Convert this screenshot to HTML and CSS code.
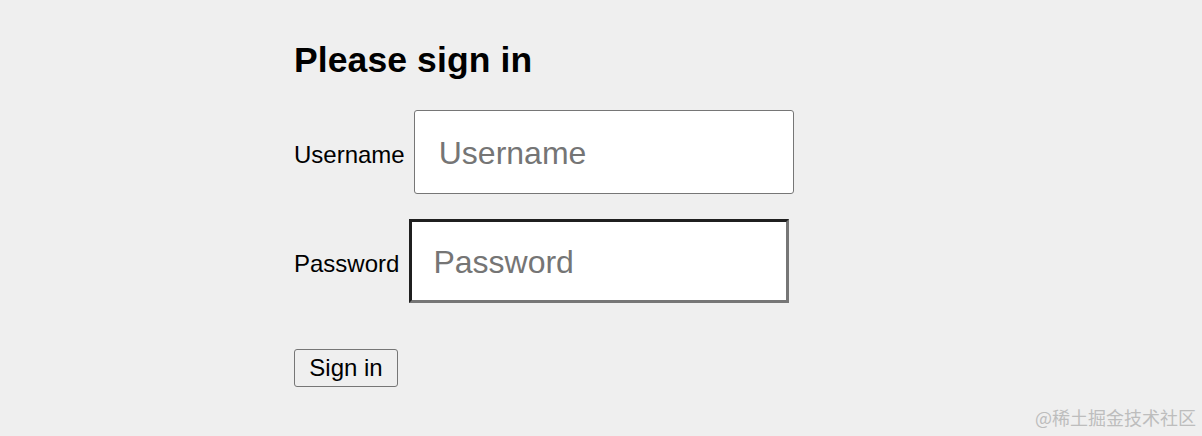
FILE: index.html
```html
<!DOCTYPE html>
<html lang="en">
<head>
<meta charset="utf-8">
<title>Please sign in</title>
<link rel="stylesheet" href="styles.css">
</head>
<body>
<main class="signin">
  <h2 class="title">Please sign in</h2>
  <form class="form">
    <div class="row">
      <label class="label" for="username">Username</label>
      <input class="field field-user" id="username" type="text" placeholder="Username">
    </div>
    <div class="row">
      <label class="label" for="password">Password</label>
      <input class="field field-pass" id="password" type="password" placeholder="Password">
    </div>
    <button class="btn" type="button">Sign in</button>
  </form>
</main>
<div class="watermark">@稀土掘金技术社区</div>
</body>
</html>
```
FILE: styles.css
```css
html, body {
  margin: 0;
  padding: 0;
  height: 100%;
}
body {
  background: #efefef;
  font-family: "Liberation Sans", Arial, Helvetica, sans-serif;
  color: #000;
  position: relative;
  overflow: hidden;
}
.signin {
  padding: 40px 0 0 294px;
}
.title {
  margin: 0;
  font-size: 35.5px;
  font-weight: bold;
  line-height: 41px;
  letter-spacing: 0.1px;
}
.form {
  display: flex;
  flex-direction: column;
  align-items: flex-start;
  margin-top: 29px;
}
.row {
  display: flex;
  align-items: center;
  gap: 9px;
  margin-bottom: 25px;
}
.row + .row {
  margin-bottom: 46px;
}
.label {
  font-size: 24px;
  margin-top: 6px;
}
.field {
  box-sizing: border-box;
  width: 380px;
  height: 84px;
  font-family: "Liberation Sans", Arial, Helvetica, sans-serif;
  font-size: 32px;
  background: #fff;
  color: #000;
  outline: none;
}
.field::placeholder {
  color: #757575;
}
.field-user {
  border: 1px solid #767676;
  border-radius: 3px;
  padding: 2px 0 0 24px;
}
.field-pass {
  border-style: solid;
  border-width: 3px;
  border-color: #1f1f1f #767676 #767676 #1f1f1f;
  border-radius: 0;
  padding: 3px 0 0 21px;
  margin-left: 1px;
}
.btn {
  box-sizing: border-box;
  width: 104px;
  height: 38px;
  font-family: "Liberation Sans", Arial, Helvetica, sans-serif;
  font-size: 24px;
  background: #efefef;
  color: #000;
  border: 1px solid #767676;
  border-radius: 3px;
  padding: 0;
}
.watermark {
  position: absolute;
  right: 6px;
  bottom: 6px;
  font-family: "Noto Sans CJK SC", "Liberation Sans", sans-serif;
  font-size: 18px;
  color: #bdbdbd;
}
```
